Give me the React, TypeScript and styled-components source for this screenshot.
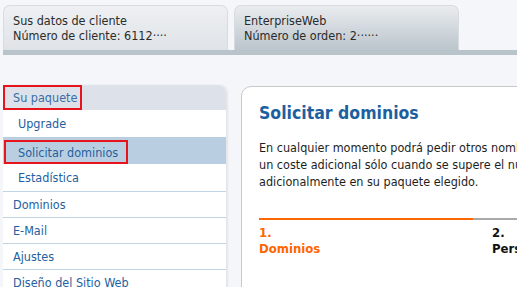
import { ReactElement } from "react";
import styled, { createGlobalStyle } from "styled-components";

const GlobalStyle = createGlobalStyle`
  body {
    margin: 0;
    background: #f5f6f9;
    overflow: hidden;
    font-family: "DejaVu Sans Condensed", "DejaVu Sans", sans-serif;
  }
`;

const SUB_ITEMS = ["Upgrade", "Solicitar dominios", "Estadística"];
const MAIN_ITEMS = ["Dominios", "E-Mail", "Ajustes", "Diseño del Sitio Web"];

export default function App(): ReactElement {
  return (
    <>
      <GlobalStyle />
      <Page>
        <TabBar>
          <Tab>
            <TabLine>Sus datos de cliente</TabLine>
            <TabLine>Número de cliente: 6112····</TabLine>
          </Tab>
          <Tab $active>
            <TabLine>EnterpriseWeb</TabLine>
            <TabLine>Número de orden: 2······</TabLine>
          </Tab>
        </TabBar>
        <Content>
          <Sidebar>
            <SidebarHeader>
              <Highlight $pad="0 3px 0 8px">Su paquete</Highlight>
            </SidebarHeader>
            {SUB_ITEMS.map((item) => {
              const active = item === "Solicitar dominios";
              return (
                <SubItem key={item} $active={active}>
                  {active ? (
                    <Highlight $pad="0 8px 0 12px">{item}</Highlight>
                  ) : (
                    <span>{item}</span>
                  )}
                </SubItem>
              );
            })}
            {MAIN_ITEMS.map((item) => (
              <MainItem key={item}>{item}</MainItem>
            ))}
          </Sidebar>
          <Panel>
            <Title>Solicitar dominios</Title>
            <Text>
              En cualquier momento podrá pedir otros nombres de dominio. Se cobrará
              <br />
              un coste adicional sólo cuando se supere el número de dominios incluidos
              <br />
              adicionalmente en su paquete elegido.
            </Text>
            <Steps>
              <Step $active>
                <span>1.</span>
                <span>Dominios</span>
              </Step>
              <Step>
                <span>2.</span>
                <span>Personalizar</span>
              </Step>
            </Steps>
          </Panel>
        </Content>
      </Page>
    </>
  );
}

const Page = styled.div`
  padding-top: 5px;
`;

const TabBar = styled.div`
  display: flex;
  gap: 6px;
  margin-left: 3px;
  border-bottom: 5px solid #b9c3ca;
`;

const Tab = styled.div<{ $active?: boolean }>`
  display: flex;
  flex-direction: column;
  width: 225px;
  height: 45px;
  box-sizing: border-box;
  padding: 7px 0 0 9px;
  border: 1px solid #d8dce1;
  border-bottom: none;
  border-radius: 7px 7px 0 0;
  background: ${(p) =>
    p.$active
      ? "linear-gradient(#e9ecef, #bbc5cc)"
      : "linear-gradient(#eef0f3, #dfe3e7)"};
  color: #2b2b2b;
  font-size: 12.5px;
  line-height: 15px;
`;

const TabLine = styled.span`
  white-space: nowrap;
`;

const Content = styled.div`
  display: flex;
  align-items: flex-start;
  gap: 15px;
  margin: 30px 0 0 3px;
`;

const Sidebar = styled.div`
  display: flex;
  flex-direction: column;
  flex: 0 0 223px;
  background: #ffffff;
  border-radius: 0 8px 0 0;
  box-shadow: 2px 0 2px rgba(0, 0, 0, 0.07);
  font-size: 12.5px;
  color: #245fa0;
`;

const SidebarHeader = styled.div`
  display: flex;
  height: 25px;
  background: #dde2ea;
  border-radius: 0 8px 0 0;
  color: #3a6da6;
`;

const Highlight = styled.span<{ $pad: string }>`
  display: flex;
  align-items: center;
  box-sizing: border-box;
  height: 100%;
  padding: ${(p) => p.$pad};
  border: 2px solid #e8141b;
`;

const SubItem = styled.div<{ $active?: boolean }>`
  display: flex;
  align-items: center;
  height: 27px;
  box-sizing: border-box;
  padding: ${(p) => (p.$active ? "3px 0 0 1px" : "0 0 0 15px")};
  background: ${(p) => (p.$active ? "#b9cfe1" : "transparent")};
`;

const MainItem = styled.div`
  display: flex;
  align-items: center;
  height: 26px;
  box-sizing: border-box;
  padding-left: 10px;
  border-top: 1px solid #c0d4e4;
  white-space: nowrap;

  &:first-of-type {
    border-top-width: 2px;
  }
`;

const Panel = styled.div`
  flex: 0 0 500px;
  min-height: 300px;
  margin-top: 1px;
  box-sizing: border-box;
  padding: 14px 0 0 17px;
  background: #ffffff;
  border: 1px solid #c9c9c9;
  border-radius: 10px 0 0 0;
`;

const Title = styled.h1`
  margin: 0;
  font-size: 17.5px;
  line-height: 24px;
  font-weight: bold;
  color: #1d5f9f;
`;

const Text = styled.p`
  margin: 14px 0 0;
  font-size: 12.5px;
  line-height: 17px;
  color: #1e1e1e;
  white-space: nowrap;
`;

const Steps = styled.div`
  display: flex;
  margin-top: 28px;
  border-top: 2px solid #a9a9a9;
`;

const Step = styled.div<{ $active?: boolean }>`
  display: flex;
  flex-direction: column;
  flex: 0 0 214px;
  margin: -2px 19px 0 0;
  padding-top: 5px;
  border-top: 2px solid ${(p) => (p.$active ? "#ff6600" : "transparent")};
  font-size: 13px;
  line-height: 16px;
  font-weight: bold;
  color: ${(p) => (p.$active ? "#ff6600" : "#111111")};
`;
